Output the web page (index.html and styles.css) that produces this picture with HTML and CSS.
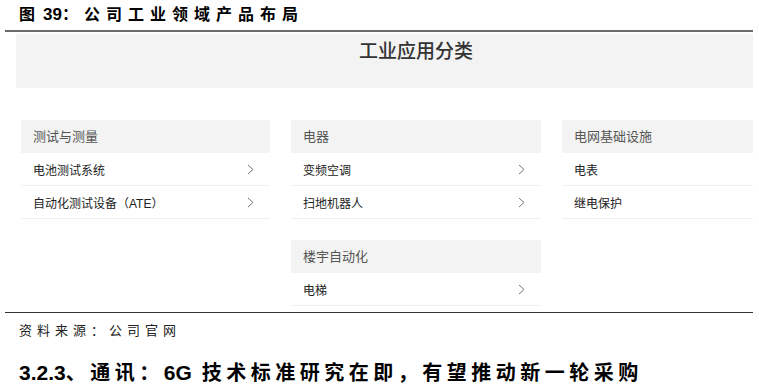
FILE: index.html
```html
<!DOCTYPE HTML>
<html>
<head>
<meta http-equiv="Content-Type" content="text/html; charset=utf-8">
<title>公司工业领域产品布局</title>
<link rel="stylesheet" href="styles.css">
</head>
<body>
<div class="caption">图<b>39</b>：公司工业领域产品布局</div>
<div class="figure">
  <div class="clip">
    <div class="banner">工业应用分类</div>
    <div class="cols">
      <div class="col">
        <dl class="grp">
          <dt>测试与测量</dt>
          <dd><span>电池测试系统</span><svg class="arr" width="7" height="11" viewBox="0 0 7 11"><polyline points="1,1 6,5.5 1,10"/></svg></dd>
          <dd><span>自动化测试设备（ATE）</span><svg class="arr" width="7" height="11" viewBox="0 0 7 11"><polyline points="1,1 6,5.5 1,10"/></svg></dd>
        </dl>
      </div>
      <div class="col">
        <dl class="grp">
          <dt>电器</dt>
          <dd><span>变频空调</span><svg class="arr" width="7" height="11" viewBox="0 0 7 11"><polyline points="1,1 6,5.5 1,10"/></svg></dd>
          <dd><span>扫地机器人</span><svg class="arr" width="7" height="11" viewBox="0 0 7 11"><polyline points="1,1 6,5.5 1,10"/></svg></dd>
        </dl>
        <dl class="grp">
          <dt>楼宇自动化</dt>
          <dd><span>电梯</span><svg class="arr" width="7" height="11" viewBox="0 0 7 11"><polyline points="1,1 6,5.5 1,10"/></svg></dd>
        </dl>
      </div>
      <div class="col">
        <dl class="grp">
          <dt>电网基础设施</dt>
          <dd><span>电表</span></dd>
          <dd><span>继电保护</span></dd>
        </dl>
      </div>
    </div>
  </div>
</div>
<div class="source">资料来源：公司官网</div>
<h3 class="sect"><b>3.2.3</b>、通讯：<b>6G</b> 技术标准研究在即，有望推动新一轮采购</h3>
</body>
</html>
```

FILE: styles.css
```css
body {margin:0; background:#fff; color:#000; font-family:"Liberation Sans","Noto Sans CJK SC",sans-serif;}
.caption {height:30px; line-height:29px; padding-left:19px; font-size:16px; font-weight:bold; letter-spacing:6px;}
.caption b {letter-spacing:0; margin-left:2px; font-size:17px;}
.figure {margin:0 6px 0 5px; border-top:2px solid #6a6a6a; border-bottom:1px solid #333; padding:2px 0 6px 11px;}
.clip {overflow:hidden;}
.banner {width:800px; height:54px; background:#f3f3f3; text-align:center; line-height:36px; font-size:19px; font-weight:500; color:#333;}
.cols {margin-top:32px; padding-left:5px; display:grid; grid-template-columns:249px 250px 249px; column-gap:21px;}
.col {display:flex; flex-direction:column; gap:21px;}
.grp {margin:0;}
.grp dt {height:33px; line-height:33px; background:#f3f3f3; padding-left:12px; font-size:13px; color:#555;}
.grp dd {margin:0; height:32px; border-bottom:1px solid #f0f0f0; display:flex; align-items:center; justify-content:space-between; padding:0 16px 0 12px; font-size:12px; color:#222;}
.arr {fill:none; stroke:#777; stroke-width:1;}
.source {padding:7px 0 0 19px; height:22px; font-size:13px; letter-spacing:5px; color:#222;}
.sect {margin:15px 0 0 19px; font-size:20px; font-weight:bold; letter-spacing:4.5px;}
.sect b {letter-spacing:0; font-size:21px;}
```
